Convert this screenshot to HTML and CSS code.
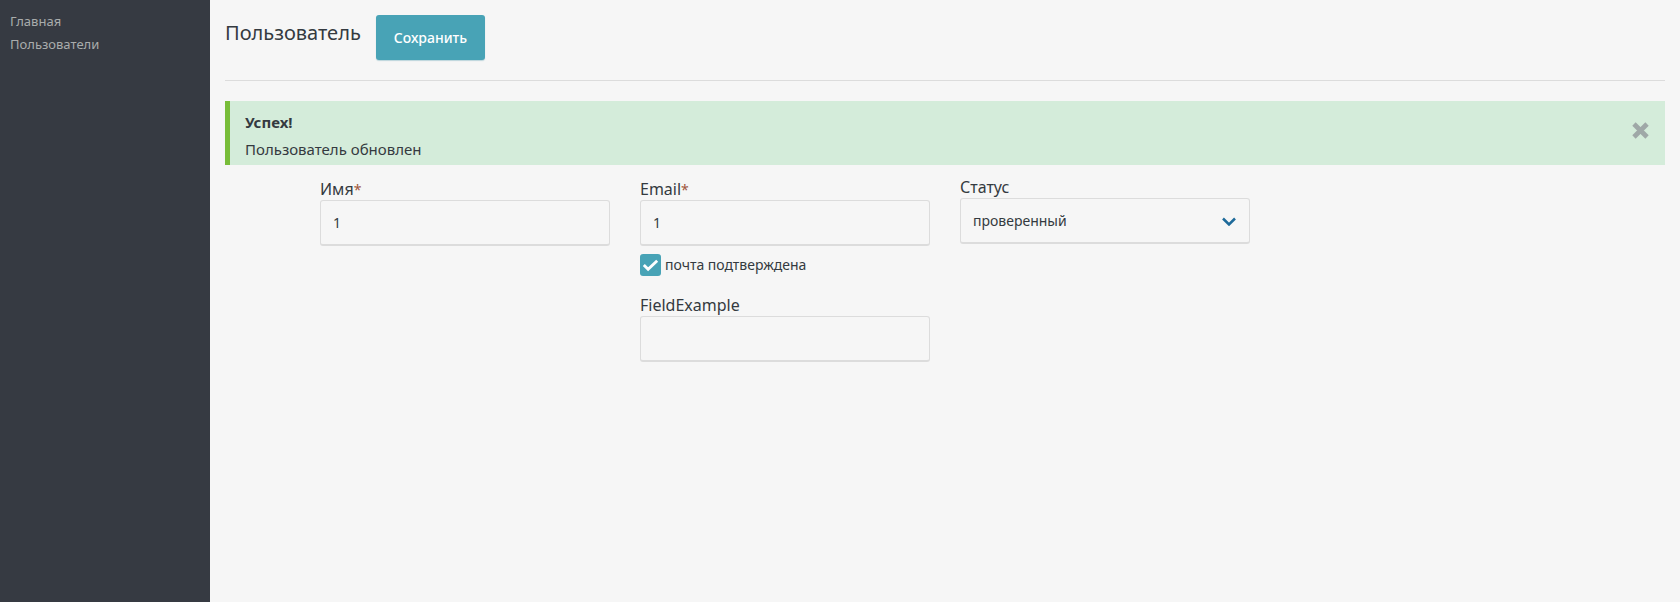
FILE: index.html
```html
<!DOCTYPE html>
<html lang="ru">
<head>
<meta charset="utf-8">
<meta name="viewport" content="width=device-width, initial-scale=1">
<title>Пользователь</title>
<link rel="stylesheet" href="styles.css">
</head>
<body>
<div class="layout">
  <nav class="sidebar">
    <a class="sidebar-link" href="#">Главная</a>
    <a class="sidebar-link" href="#">Пользователи</a>
  </nav>
  <main class="content">
    <header class="page-header">
      <h1 class="page-title">Пользователь</h1>
      <button class="save-button" type="submit" form="user-form">Сохранить</button>
    </header>
    <section class="alert" role="status">
      <div class="alert-body">
        <strong class="alert-title">Успех!</strong>
        <p class="alert-text">Пользователь обновлен</p>
      </div>
      <button class="alert-close" type="button" aria-label="Закрыть">
        <svg class="close-icon" viewBox="0 0 16 16"><path d="M2.5 2.5 13.5 13.5M13.5 2.5 2.5 13.5"/></svg>
      </button>
    </section>
    <form class="user-form" id="user-form">
      <div class="column">
        <div class="field">
          <label class="label" for="name">Имя<span class="required">*</span></label>
          <input class="control" id="name" type="text" value="1">
        </div>
      </div>
      <div class="column">
        <div class="field">
          <label class="label" for="email">Email<span class="required">*</span></label>
          <input class="control" id="email" type="text" value="1">
        </div>
        <div class="check">
          <span class="check-mark">
            <input class="check-input" id="confirmed" type="checkbox" checked>
            <svg class="check-icon" viewBox="0 0 22 22"><path d="m4 11 4.5 4.5L18 6.5"/></svg>
          </span>
          <label class="check-label" for="confirmed">почта подтверждена</label>
        </div>
        <div class="field">
          <label class="label" for="example">FieldExample</label>
          <input class="control" id="example" type="text">
        </div>
      </div>
      <div class="column">
        <div class="field field-select">
          <label class="label" for="status">Статус</label>
          <div class="select-box">
            <select class="control select" id="status"><option>проверенный</option></select>
            <svg class="select-icon" viewBox="0 0 14 9"><path d="m1 1.5 6 6 6-6"/></svg>
          </div>
        </div>
      </div>
    </form>
  </main>
</div>
</body>
</html>
```
FILE: styles.css
```css
* {
  box-sizing: border-box;
}

body {
  margin: 0;
  background: #f6f6f6;
  color: #343a40;
  font-family: "Noto Sans", "Open Sans", sans-serif;
  font-size: 16px;
}

.layout {
  display: flex;
  min-height: 100vh;
}

.sidebar {
  display: flex;
  flex: 0 0 210px;
  flex-direction: column;
  padding: 10px;
  background: #363a42;
}

.sidebar-link {
  color: #a9acac;
  font-size: 13px;
  line-height: 23px;
  text-decoration: none;
}

.content {
  flex: 1;
  min-width: 0;
  padding: 15px;
}

.page-header {
  display: flex;
  align-items: flex-start;
  gap: 15px;
  margin-bottom: 20px;
  padding-bottom: 20px;
  border-bottom: 1px solid #dcdcdc;
}

.page-title {
  margin: 0;
  font-size: 20px;
  font-weight: 400;
  line-height: 36px;
}

.save-button {
  height: 45px;
  padding: 0 18px;
  border: 0;
  border-radius: 3px;
  background: #48a3b6;
  box-shadow: 0 1px 1px #bcd5dc;
  color: #fff;
  font: 500 14px "Noto Sans", "Open Sans", sans-serif;
}

.alert {
  display: flex;
  align-items: flex-start;
  justify-content: space-between;
  padding: 8px 15px 2px;
  border-left: 5px solid #78bd39;
  background: #d4ecda;
}

.alert-title,
.alert-text {
  display: block;
  margin: 0;
  font-size: 15px;
  line-height: 27px;
}

.alert-close {
  display: flex;
  margin-top: 12px;
  padding: 0;
  border: 0;
  background: none;
}

.close-icon {
  width: 19px;
  height: 19px;
  fill: none;
  stroke: #9fa8a7;
  stroke-width: 4;
}

.user-form {
  display: grid;
  grid-template-columns: repeat(4, minmax(0, 1fr));
  gap: 30px;
  max-width: 1250px;
  margin: 0 auto;
  padding-top: 13px;
}

.field {
  display: flex;
  flex-direction: column;
}

.label {
  font-size: 16px;
  line-height: 22px;
}

.field-select .label {
  height: 20px;
  line-height: 18px;
}

.required {
  color: #a0563c;
  font-size: 14px;
  line-height: 1;
}

.control {
  width: 100%;
  height: 46px;
  padding: 0 12px;
  border: 1px solid #dcdcdc;
  border-bottom-width: 2px;
  border-radius: 3px;
  background: #f6f6f6;
  color: #343a40;
  font: 14px "Noto Sans", "Open Sans", sans-serif;
}

.check {
  display: flex;
  align-items: center;
  gap: 4px;
  margin: 8px 0 18px;
}

.check-mark {
  display: grid;
}

.check-input,
.check-icon {
  grid-area: 1 / 1;
  width: 21px;
  height: 22px;
  margin: 0;
}

.check-input {
  appearance: none;
  border-radius: 3px;
  background: #48a3b6;
}

.check-icon {
  fill: none;
  stroke: #fff;
  stroke-width: 3;
  pointer-events: none;
}

.check-label {
  font-size: 14px;
  line-height: 22px;
}

.select-box {
  display: grid;
  align-items: center;
}

.select {
  grid-area: 1 / 1;
  appearance: none;
}

.select-icon {
  grid-area: 1 / 1;
  justify-self: end;
  width: 14px;
  height: 9px;
  margin-right: 14px;
  fill: none;
  stroke: #1e6a9a;
  stroke-width: 2.5;
  pointer-events: none;
}
```
